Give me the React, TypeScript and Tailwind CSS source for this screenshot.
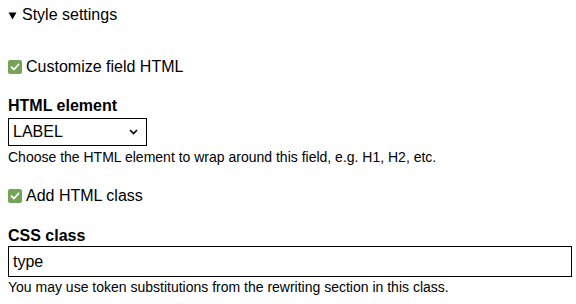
export default function App() {
  return (
    <div className="w-[576px] h-[304px] overflow-hidden bg-white text-black font-['Liberation_Sans',Arial,sans-serif] px-2">
      <div className="flex items-center gap-[5px] h-[30px] text-base">
        <svg width="9" height="8" viewBox="0 0 9 8" className="mt-[1px]">
          <path d="M0.5 0.5 L8.5 0.5 L4.5 7.5 Z" fill="black" />
        </svg>
        <span>Style settings</span>
      </div>

      <label className="mt-[25px] flex items-center gap-[4px] text-base">
        <span className="w-[14px] h-[14px] rounded-[2px] bg-[#76a35a] flex items-center justify-center">
          <svg width="10" height="10" viewBox="0 0 10 10" fill="none">
            <path d="M1.5 5.2 L4 7.5 L8.5 2.5" stroke="white" strokeWidth="1.8" strokeLinecap="round" strokeLinejoin="round" />
          </svg>
        </span>
        <span>Customize field HTML</span>
      </label>

      <div className="mt-[18px] font-bold text-base leading-[18px]">HTML element</div>
      <div className="mt-[3px] w-[139px] h-[28px] border border-black flex items-center justify-between pl-[4px] pr-[8px] text-base">
        <span>LABEL</span>
        <svg width="9" height="6" viewBox="0 0 9 6" fill="none">
          <path d="M1 1 L4.5 4.5 L8 1" stroke="black" strokeWidth="1.6" />
        </svg>
      </div>
      <div className="mt-[3px] text-sm leading-[17px]">Choose the HTML element to wrap around this field, e.g. H1, H2, etc.</div>

      <label className="mt-[18px] flex items-center gap-[4px] text-base">
        <span className="w-[14px] h-[14px] rounded-[2px] bg-[#76a35a] flex items-center justify-center">
          <svg width="10" height="10" viewBox="0 0 10 10" fill="none">
            <path d="M1.5 5.2 L4 7.5 L8.5 2.5" stroke="white" strokeWidth="1.8" strokeLinecap="round" strokeLinejoin="round" />
          </svg>
        </span>
        <span>Add HTML class</span>
      </label>

      <div className="mt-[19px] font-bold text-base leading-[18px]">CSS class</div>
      <div className="mt-[1px] w-[564px] h-[31px] border border-black flex items-center pl-[4px] text-base">
        type
      </div>
      <div className="mt-[2px] text-sm leading-[17px]">You may use token substitutions from the rewriting section in this class.</div>
    </div>
  );
}
